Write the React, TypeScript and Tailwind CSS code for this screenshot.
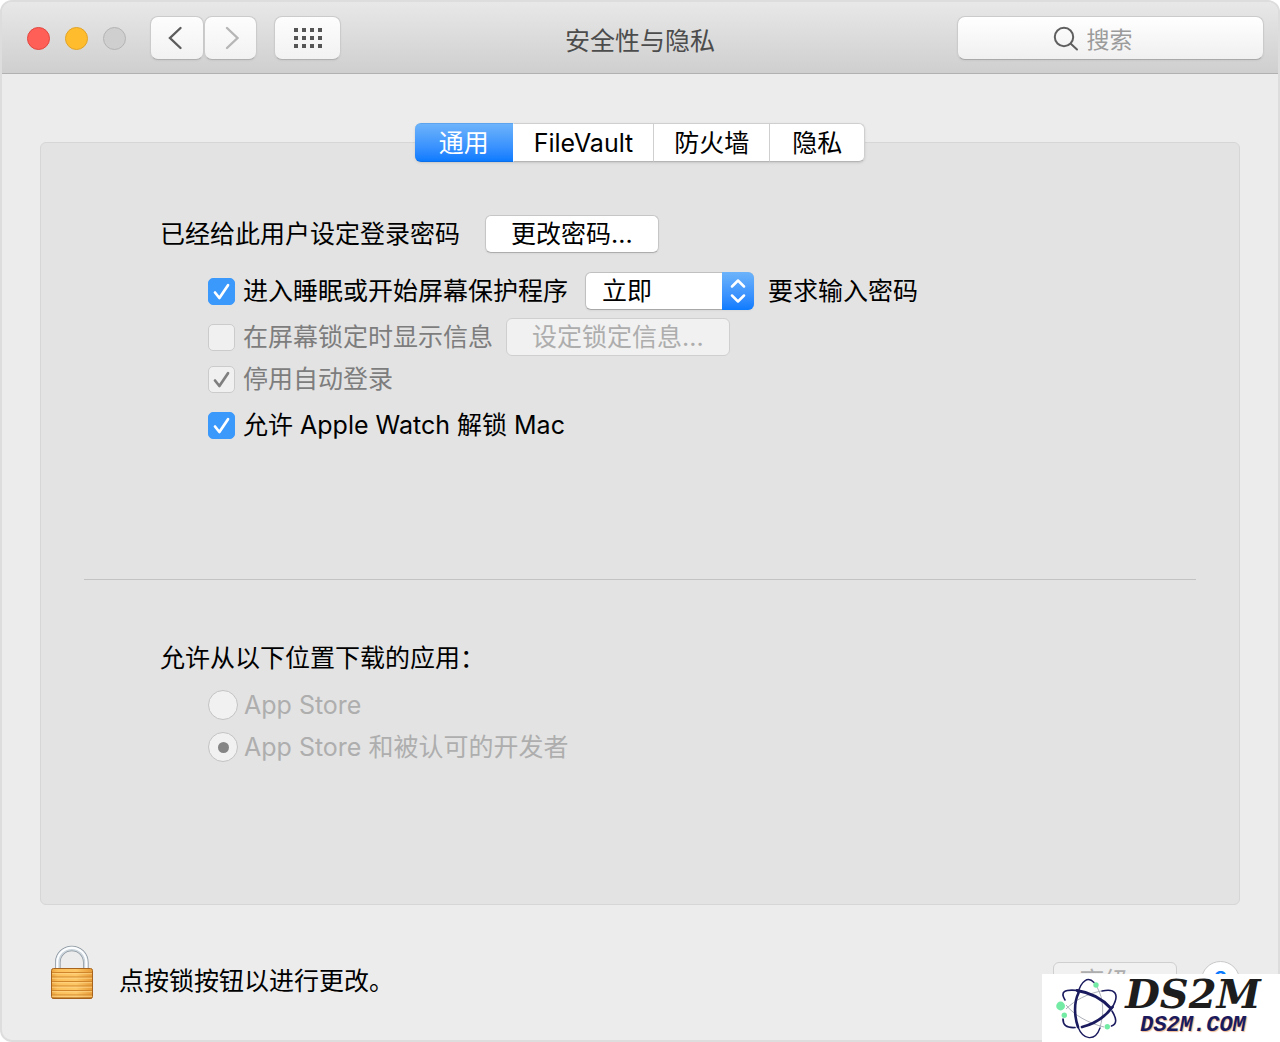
import { useState } from "react";
import type { ReactNode } from "react";

type TabId = "general" | "filevault" | "firewall" | "privacy";

const TABS: { id: TabId; label: string }[] = [
  { id: "general", label: "通用" },
  { id: "filevault", label: "FileVault" },
  { id: "firewall", label: "防火墙" },
  { id: "privacy", label: "隐私" },
];

const GRID_DOTS = [0, 1, 2].flatMap((row) =>
  [0, 1, 2, 3].map((col) => ({ x: col * 8, y: row * 8 })),
);

const LOCK_LINES = [27.5, 32, 36.5, 41, 45.5, 50];

function ToolbarButton({
  label,
  className,
  disabled,
  children,
}: {
  label: string;
  className: string;
  disabled?: boolean;
  children: ReactNode;
}) {
  return (
    <button
      type="button"
      aria-label={label}
      disabled={disabled}
      className={`flex h-11 items-center justify-center rounded-lg border border-[#cbcbcb] border-b-[#b0b0b0] bg-linear-to-b from-[#fdfdfd] to-[#f2f2f2] shadow-xs ${className}`}
    >
      {children}
    </button>
  );
}

function PushButton({
  disabled,
  children,
}: {
  disabled?: boolean;
  children: ReactNode;
}) {
  return (
    <button
      type="button"
      disabled={disabled}
      className="h-[38px] rounded-md border border-[#c6c6c6] border-b-[#adadad] bg-white px-[25px] leading-9 whitespace-nowrap shadow-xs disabled:border-[#cfcfcf] disabled:bg-[#f1f1f1] disabled:text-[#adadad] disabled:shadow-none"
    >
      {children}
    </button>
  );
}

function Checkbox({
  id,
  label,
  defaultChecked,
  disabled,
}: {
  id: string;
  label: string;
  defaultChecked?: boolean;
  disabled?: boolean;
}) {
  return (
    <div className="flex items-center gap-2">
      <span className="grid size-[27px] shrink-0">
        <input
          id={id}
          type="checkbox"
          defaultChecked={defaultChecked}
          disabled={disabled}
          className="peer col-start-1 row-start-1 size-[27px] appearance-none rounded-[5px] border border-[#c4c4c4] bg-white enabled:checked:border-[#3b99fc] enabled:checked:bg-[#3b99fc] disabled:border-[#cbcbcb] disabled:bg-[#f0f0f0]"
        />
        <svg
          viewBox="0 0 27 27"
          className="pointer-events-none invisible col-start-1 row-start-1 size-[27px] text-white peer-checked:visible peer-disabled:text-[#7f7f7f]"
          fill="none"
          stroke="currentColor"
          strokeWidth="2.7"
          strokeLinecap="round"
          strokeLinejoin="round"
        >
          <path d="M7 14.5 11.4 20 20 7.2" />
        </svg>
      </span>
      <label
        htmlFor={id}
        className={`whitespace-nowrap ${disabled ? "text-[#7d7d7d]" : ""}`}
      >
        {label}
      </label>
    </div>
  );
}

function Radio({
  id,
  label,
  defaultChecked,
}: {
  id: string;
  label: string;
  defaultChecked?: boolean;
}) {
  return (
    <div className="flex h-[42px] items-center gap-1.5 text-[#aeaeae]">
      <span className="grid size-[30px] place-items-center">
        <input
          id={id}
          type="radio"
          name="download-source"
          defaultChecked={defaultChecked}
          disabled
          className="peer col-start-1 row-start-1 size-[30px] appearance-none rounded-full border border-[#c3c3c3] bg-[#f1f1f1]"
        />
        <span className="invisible col-start-1 row-start-1 size-[11px] rounded-full bg-[#858585] peer-checked:visible" />
      </span>
      <label htmlFor={id}>{label}</label>
    </div>
  );
}

function PadlockIcon() {
  return (
    <svg viewBox="0 0 44 55" className="h-[55px] w-11">
      <defs>
        <linearGradient id="lock-body" x1="0" x2="1">
          <stop offset="0" stopColor="#e9a23c" />
          <stop offset="0.15" stopColor="#fbbf5a" />
          <stop offset="0.6" stopColor="#fdc766" />
          <stop offset="1" stopColor="#e69a35" />
        </linearGradient>
      </defs>
      <g fill="none">
        <path
          d="M7.8 25V17.5a14 14 0 0 1 28 0V25"
          stroke="#8b959e"
          strokeWidth="5.6"
        />
        <path
          d="M7.8 25V17.5a14 14 0 0 1 28 0V25"
          stroke="#ccd5dc"
          strokeWidth="4.2"
        />
        <path
          d="M7.3 25V17.3a14.5 14.5 0 0 1 29 0V25"
          stroke="#fbfdff"
          strokeWidth="2.2"
        />
      </g>
      <rect
        x="1.5"
        y="23.5"
        width="41"
        height="30"
        rx="2"
        fill="url(#lock-body)"
        stroke="#a8641c"
      />
      {LOCK_LINES.map((y) => (
        <g key={y}>
          <path d={`M2 ${y}h40`} stroke="#cf852c" strokeWidth="1.1" />
          <path d={`M2 ${y + 1.2}h40`} stroke="#ffd88a" strokeWidth="0.8" />
        </g>
      ))}
      <path d="M2.5 53.2h39" stroke="#a5601b" strokeWidth="1.2" />
    </svg>
  );
}

function AtomLogo() {
  return (
    <svg viewBox="0 0 62 62" className="size-[62px] shrink-0" fill="none">
      <g stroke="#a3a7b0" strokeWidth="0.9">
        <path d="M41 10c7 12 7 28 3 40" />
        <path d="M10 32c9-9 21-15 35-18" />
        <path d="M10 28c8 10 22 18 38 22" />
      </g>
      <g stroke="#1a1a5e" strokeLinecap="round">
        <path d="M22 16C25 4 32-1 38 5.5" strokeWidth="1.4" />
        <path d="M22.5 16c-5 10-4 24-.5 34" strokeWidth="2.6" />
        <path d="M22 50c5 13 17 15 22 1" strokeWidth="1.4" />
        <path d="M9 23C4 15 8 12 22 13.5" strokeWidth="1.6" />
        <path d="M21 13.5c13 2 25 8 34 18" strokeWidth="2.8" />
        <path d="M56 34c5 8 5 13-.5 15" strokeWidth="1.6" />
        <path d="M46 14c13-3 18 3 10.5 16" strokeWidth="1.6" />
        <path d="M56.5 30C49 40 38 47 26 50" strokeWidth="2.8" />
        <path d="M19 50.5C10 51 7 48 7 42" strokeWidth="1.7" />
      </g>
      <g fill="#74eba4">
        <circle cx="4.6" cy="29" r="4.4" />
        <circle cx="8.3" cy="38.3" r="2.7" />
        <circle cx="40" cy="8" r="2.7" />
        <circle cx="51.3" cy="49.7" r="2.7" />
      </g>
    </svg>
  );
}

function TitleBar() {
  return (
    <header className="grid grid-cols-[1fr_auto_1fr] items-center border-b border-[#b1b1b1] bg-linear-to-b from-[#e8e8e8] to-[#cfcfcf] px-3.5 pt-3.5 pb-[13px]">
      <div className="flex items-center pl-[11px]">
        <div className="flex gap-[15px]">
          <button
            type="button"
            aria-label="关闭"
            className="size-[23px] rounded-full border border-[#e2463f] bg-[#ff5f57]"
          />
          <button
            type="button"
            aria-label="最小化"
            className="size-[23px] rounded-full border border-[#e1a325] bg-[#ffbd2e]"
          />
          <button
            type="button"
            aria-label="缩放"
            disabled
            className="size-[23px] rounded-full border border-[#b4b4b4] bg-[#cfcfcf]"
          />
        </div>
        <div className="ml-6 flex">
          <ToolbarButton label="后退" className="w-[54px]">
            <svg
              viewBox="0 0 18 24"
              className="h-6 w-[18px]"
              fill="none"
              stroke="#5c5c5c"
              strokeWidth="2.4"
              strokeLinecap="round"
            >
              <path d="M12.5 2 2 12l10.5 10" />
            </svg>
          </ToolbarButton>
          <ToolbarButton label="前进" className="w-[53px]" disabled>
            <svg
              viewBox="0 0 18 24"
              className="h-6 w-[18px]"
              fill="none"
              stroke="#b6b6b6"
              strokeWidth="2.4"
              strokeLinecap="round"
            >
              <path d="M5 2 15.5 12 5 22" />
            </svg>
          </ToolbarButton>
        </div>
        <div className="ml-[17px]">
          <ToolbarButton label="显示全部" className="w-[67px]">
            <svg viewBox="0 0 28 20" className="h-5 w-7" fill="#555555">
              {GRID_DOTS.map((dot) => (
                <rect
                  key={`${dot.x}-${dot.y}`}
                  x={dot.x}
                  y={dot.y}
                  width="4"
                  height="4"
                />
              ))}
            </svg>
          </ToolbarButton>
        </div>
      </div>
      <h1 className="pt-1.5 text-[#4c4c4c]">安全性与隐私</h1>
      <label className="flex h-11 w-[307px] items-center justify-center gap-2 justify-self-end rounded-lg border border-[#cbcbcb] border-b-[#a9a9a9] bg-linear-to-b from-white to-[#f0f0f0] pr-9 shadow-xs">
        <svg
          viewBox="0 0 26 26"
          className="size-[26px]"
          fill="none"
          stroke="#5f5f5f"
          strokeWidth="2"
          strokeLinecap="round"
        >
          <circle cx="11" cy="12" r="9.2" />
          <path d="m17.8 18.8 6.2 5.7" />
        </svg>
        <input
          type="text"
          aria-label="搜索"
          placeholder="搜索"
          className="field-sizing-content pt-1 text-[23px] outline-none placeholder:text-[#9b9b9b]"
        />
      </label>
    </header>
  );
}

function GeneralPanel() {
  return (
    <section className="-mt-5 flex-1 rounded-md border border-[#d6d6d6] bg-[#e3e3e3] pt-[72px] pb-10">
      <div className="pl-[119px]">
        <div className="flex items-center gap-[25px]">
          <span>已经给此用户设定登录密码</span>
          <PushButton>更改密码...</PushButton>
        </div>
        <div className="pl-12">
          <div className="mt-[19px] flex items-center">
            <Checkbox
              id="require-password"
              label="进入睡眠或开始屏幕保护程序"
              defaultChecked
            />
            <div className="ml-[17px] grid h-[38px] w-[169px]">
              <select
                aria-label="要求输入密码的时间"
                defaultValue="now"
                className="col-start-1 row-start-1 appearance-none rounded-md border border-[#c0c0c0] border-b-[#a8a8a8] bg-white pl-4 leading-9 shadow-xs"
              >
                <option value="now">立即</option>
                <option value="5s">5 秒钟</option>
                <option value="1m">1 分钟</option>
                <option value="5m">5 分钟</option>
              </select>
              <span className="pointer-events-none col-start-1 row-start-1 flex w-8 items-center justify-center justify-self-end rounded-r-md bg-linear-to-b from-[#6cb3fa] to-[#0a7bff]">
                <svg
                  viewBox="0 0 16 24"
                  className="h-6 w-4"
                  fill="none"
                  stroke="white"
                  strokeWidth="2.5"
                  strokeLinecap="round"
                  strokeLinejoin="round"
                >
                  <path d="m2 7.5 6-6 6 6M2 16.5l6 6 6-6" />
                </svg>
              </span>
            </div>
            <span className="ml-3.5">要求输入密码</span>
          </div>
          <div className="mt-2 flex items-center gap-[13px]">
            <Checkbox id="lock-message" label="在屏幕锁定时显示信息" disabled />
            <PushButton disabled>设定锁定信息...</PushButton>
          </div>
          <div className="mt-1">
            <Checkbox
              id="disable-auto-login"
              label="停用自动登录"
              defaultChecked
              disabled
            />
          </div>
          <div className="mt-2">
            <Checkbox
              id="watch-unlock"
              label="允许 Apple Watch 解锁 Mac"
              defaultChecked
            />
          </div>
        </div>
      </div>
      <hr className="mx-[43px] mt-[135px] border-[#c3c3c3]" />
      <fieldset className="mt-[59px] pl-[119px]">
        <legend>允许从以下位置下载的应用：</legend>
        <div className="mt-[7px] pl-12">
          <Radio id="source-store" label="App Store" />
          <Radio
            id="source-developers"
            label="App Store 和被认可的开发者"
            defaultChecked
          />
        </div>
      </fieldset>
    </section>
  );
}

export default function App() {
  const [activeTab, setActiveTab] = useState<TabId>("general");

  return (
    <div className="relative flex min-h-screen flex-col bg-white font-[Inter,'Noto_Sans_CJK_SC',sans-serif] text-[25px] leading-[38px] text-black">
      <main className="flex flex-1 flex-col overflow-hidden rounded-xl border-2 border-[#dddddd] bg-[#ececec]">
        <TitleBar />
        <div className="flex flex-1 flex-col px-[38px] pt-[49px]">
          <nav className="z-10 flex self-center rounded-md shadow-sm">
            {TABS.map((tab) => (
              <button
                key={tab.id}
                type="button"
                aria-pressed={activeTab === tab.id}
                onClick={() => setActiveTab(tab.id)}
                className={`h-[39px] border-y border-r px-5 leading-9 first:rounded-l-md first:px-6 last:rounded-r-md last:px-[22px] ${
                  activeTab === tab.id
                    ? "border-x-0 border-t-[#5ca5ee] border-b-[#0a6fe8] bg-linear-to-b from-[#6cb3fa] to-[#0a7bff] text-white"
                    : "border-[#cfcfcf] border-b-[#b5b5b5] bg-white text-black"
                }`}
              >
                {tab.label}
              </button>
            ))}
          </nav>
          <GeneralPanel />
          <footer className="flex items-end pt-10 pb-10 pl-2.5">
            <button type="button" aria-label="解锁">
              <PadlockIcon />
            </button>
            <p className="ml-[25px]">点按锁按钮以进行更改。</p>
            <div className="ml-auto flex items-center gap-6">
              <PushButton disabled>高级...</PushButton>
              <button
                type="button"
                aria-label="帮助"
                className="size-[39px] rounded-full border border-[#c8c8c8] bg-white font-medium text-[#0a7bff]"
              >
                ?
              </button>
            </div>
          </footer>
        </div>
      </main>
      <a
        href="#ds2m"
        className="absolute right-0 bottom-0 flex h-[68px] w-[238px] items-center bg-white pr-3 pl-3.5"
      >
        <AtomLogo />
        <span className="flex flex-1 flex-col items-center">
          <span className="font-['DejaVu_Serif',serif] text-[40px] leading-9 font-bold text-[#1d1d1d] italic">
            DS2M
          </span>
          <span className="font-['Liberation_Mono',monospace] text-[22px] leading-7 font-bold text-[#1a1a5e] italic [text-shadow:1px_1px_1px_#f0b890]">
            DS2M.COM
          </span>
        </span>
      </a>
    </div>
  );
}
